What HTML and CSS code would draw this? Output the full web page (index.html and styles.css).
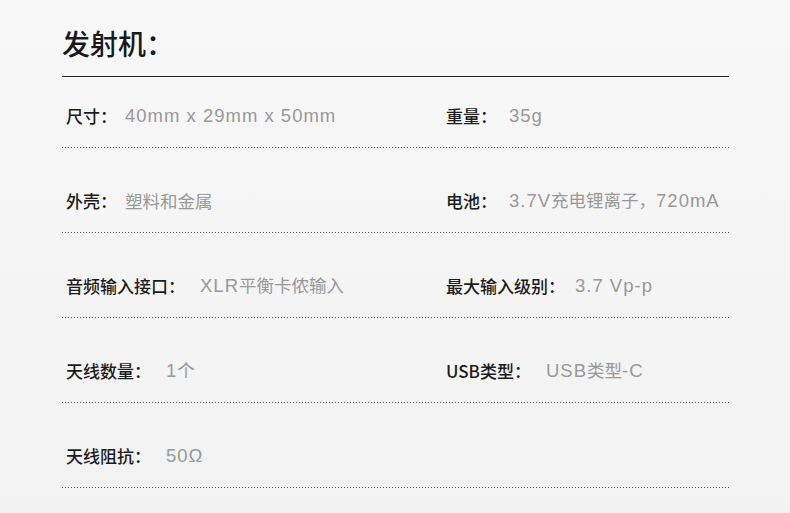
FILE: index.html
```html
<!DOCTYPE html>
<html lang="zh-CN">
<head>
<meta charset="utf-8">
<link rel="stylesheet" href="styles.css">
</head>
<body>
<div class="spec">
  <h2 class="title">发射机：</h2>
  <div class="row first">
    <div class="cell"><span class="label">尺寸：</span><span class="value gap-s"><span class="lat">40mm x 29mm x 50mm</span></span></div>
    <div class="cell"><span class="label">重量：</span><span class="value gap-m"><span class="lat">35g</span></span></div>
  </div>
  <div class="row">
    <div class="cell"><span class="label">外壳：</span><span class="value gap-s">塑料和金属</span></div>
    <div class="cell"><span class="label">电池：</span><span class="value gap-m"><span class="lat">3.7V</span>充电锂离子，<span class="lat">720mA</span></span></div>
  </div>
  <div class="row">
    <div class="cell"><span class="label">音频输入接口：</span><span class="value"><span class="lat">XLR</span>平衡卡侬输入</span></div>
    <div class="cell"><span class="label">最大输入级别：</span><span class="value gap-t"><span class="lat">3.7 Vp-p</span></span></div>
  </div>
  <div class="row">
    <div class="cell"><span class="label">天线数量：</span><span class="value"><span class="lat">1</span>个</span></div>
    <div class="cell"><span class="label">USB类型：</span><span class="value"><span class="lat">USB</span>类型<span class="lat">-C</span></span></div>
  </div>
  <div class="row">
    <div class="cell"><span class="label">天线阻抗：</span><span class="value"><span class="lat">50Ω</span></span></div>
    <div class="cell"></div>
  </div>
</div>
</body>
</html>
```
FILE: styles.css
```css
html, body {
  margin: 0;
  padding: 0;
}
body {
  width: 790px;
  height: 513px;
  overflow: hidden;
  background: linear-gradient(to bottom, #f8f8f8, #f2f2f2);
  font-family: "Noto Sans CJK SC", "Liberation Sans", sans-serif;
}
.spec {
  margin-left: 62px;
  width: 667px;
}
.title {
  margin: 0;
  padding: 23px 0 13px;
  font-size: 28px;
  line-height: 40px;
  font-weight: 500;
  color: #1a1a1a;
  border-bottom: 1px solid #222;
}
.row {
  display: grid;
  grid-template-columns: 380px 1fr;
  padding: 41px 0 22px 4px;
  height: 22px;
  background-image: linear-gradient(to right, #555 0 1px, transparent 1px 3px);
  background-size: 3px 1px;
  background-repeat: repeat-x;
  background-position: 0 100%;
}
.row.first {
  padding-top: 27px;
}
.cell {
  display: flex;
  align-items: center;
  font-size: 17px;
  line-height: 22px;
  white-space: nowrap;
}
.label {
  color: #1c1c1c;
  font-weight: 500;
}
.value {
  color: #999;
  font-size: 17.5px;
  margin-left: 15px;
}
.value.gap-s {
  margin-left: 8px;
}
.value.gap-m {
  margin-left: 12px;
}
.value.gap-t {
  margin-left: 10px;
}
.lat {
  font-family: "Liberation Sans", "Noto Sans CJK SC", sans-serif;
  font-size: 18.5px;
  letter-spacing: 1px;
}
```
